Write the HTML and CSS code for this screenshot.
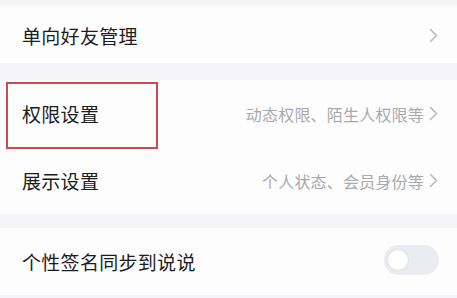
FILE: index.html
```html
<!DOCTYPE html>
<html lang="zh-CN">
<head>
    <meta charset="UTF-8">
    <meta name="viewport" content="width=device-width, initial-scale=1.0">
    <title>设置</title>
    <link rel="stylesheet" href="styles.css">
</head>
<body>
    <!-- 好友管理 -->
    <div class="group">
        <div class="row row-first">
            <span class="title">单向好友管理</span>
            <span class="extra">
                <svg class="chevron" width="9" height="15" viewBox="0 0 9 15"><polyline points="1.5,1.5 7.5,7.5 1.5,13.5"/></svg>
            </span>
        </div>
    </div>

    <!-- 权限 / 展示 -->
    <div class="group">
        <div class="row">
            <span class="title">权限设置</span>
            <span class="extra">
                <span class="hint">动态权限、陌生人权限等</span>
                <svg class="chevron" width="9" height="15" viewBox="0 0 9 15"><polyline points="1.5,1.5 7.5,7.5 1.5,13.5"/></svg>
            </span>
            <div class="highlight"></div>
        </div>
        <div class="row">
            <span class="title">展示设置</span>
            <span class="extra">
                <span class="hint">个人状态、会员身份等</span>
                <svg class="chevron" width="9" height="15" viewBox="0 0 9 15"><polyline points="1.5,1.5 7.5,7.5 1.5,13.5"/></svg>
            </span>
        </div>
    </div>

    <!-- 签名 -->
    <div class="group">
        <div class="row">
            <span class="title">个性签名同步到说说</span>
            <span class="switch"><span class="knob"></span></span>
        </div>
    </div>
</body>
</html>
```

FILE: styles.css
```css
body {
    margin: 0;
    padding-top: 6px;
    background-color: #f5f5f7;
    font-family: "Noto Sans CJK SC", "Noto Sans", sans-serif;
}
.group {
    background-color: #fdfdfd;
    margin-bottom: 14px;
}
.group:first-child {
    margin-bottom: 17px;
}
.row {
    position: relative;
    display: flex;
    align-items: center;
    justify-content: space-between;
    height: 67px;
    padding: 0 19px 0 22px;
}
.row-first {
    height: 57px;
    padding-top: 2px;
    box-sizing: border-box;
}
.title {
    font-size: 19px;
    letter-spacing: 0.3px;
    color: #1c1c1e;
}
.extra {
    display: flex;
    align-items: center;
    gap: 5px;
}
.hint {
    font-size: 16px;
    letter-spacing: 0.2px;
    color: #a9a9ad;
}
.chevron {
    fill: none;
    stroke: #b9b9bd;
    stroke-width: 1.5;
    stroke-linecap: round;
    stroke-linejoin: round;
}
.highlight {
    position: absolute;
    top: 2px;
    left: 6px;
    width: 152px;
    height: 67px;
    box-sizing: border-box;
    border: 2px solid #cf4a50;
}
.switch {
    display: flex;
    align-items: center;
    width: 55px;
    height: 30px;
    margin: -3px -1px 0 0;
    padding: 0 4px;
    box-sizing: border-box;
    border-radius: 15px;
    background-color: #ebebf2;
}
.knob {
    width: 20px;
    height: 20px;
    border-radius: 50%;
    background-color: #fff;
    box-shadow: 0 0 0 1px #e2e2e6;
}
```
